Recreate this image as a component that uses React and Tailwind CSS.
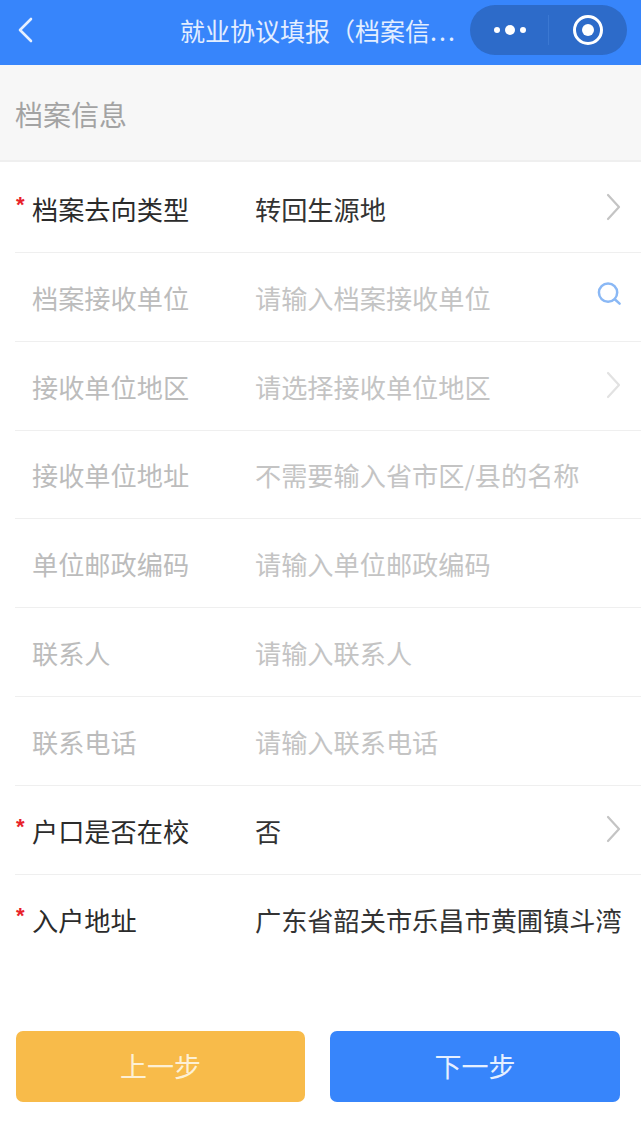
import React from 'react';

const cjk = "font-['Noto_Sans_CJK_SC','Liberation_Sans',sans-serif]";

const Chevron = ({ light }) => (
    <svg className={`w-[16px] h-[28px] mb-[2px] ${light ? 'text-[#e2e2e2]' : 'text-[#c4c4c4]'}`} viewBox="0 0 16 28" fill="none" stroke="currentColor" strokeWidth="2.2" strokeLinecap="round" strokeLinejoin="round">
        <path d="M2 2l11 12L2 26" />
    </svg>
);

const SearchIcon = () => (
    <svg className="w-[26px] h-[26px] mb-[5px] text-[#8ab8f5]" viewBox="0 0 26 26" fill="none" stroke="currentColor" strokeWidth="2.6" strokeLinecap="round">
        <circle cx="11.5" cy="11.5" r="9.5" />
        <path d="M18.5 18.5l5 4.5" />
    </svg>
);

const rows = [
    { label: '档案去向类型', value: '转回生源地', required: true, icon: <Chevron /> },
    { label: '档案接收单位', value: '请输入档案接收单位', icon: <SearchIcon /> },
    { label: '接收单位地区', value: '请选择接收单位地区', icon: <Chevron light /> },
    { label: '接收单位地址', value: '不需要输入省市区/县的名称' },
    { label: '单位邮政编码', value: '请输入单位邮政编码' },
    { label: '联系人', value: '请输入联系人' },
    { label: '联系电话', value: '请输入联系电话' },
    { label: '户口是否在校', value: '否', required: true, icon: <Chevron /> },
    { label: '入户地址', value: '广东省韶关市乐昌市黄圃镇斗湾', required: true, last: true },
];

const Row = ({ label, value, required, icon, last }) => (
    <div className={`ml-[15px] h-[88.85px] flex items-center relative ${last ? '' : 'border-b border-[#efefef]'}`}>
        {required && <span className="absolute left-[1px] top-[30px] text-[#e8212a] text-[22px] leading-[22px] font-bold font-['Liberation_Sans',sans-serif]">*</span>}
        <div className={`w-[240px] pl-[17px] pt-[2px] text-[26.2px] leading-[36px] whitespace-nowrap ${required ? 'text-[#2b2b2b]' : 'text-[#bcbcbc]'}`}>{label}</div>
        <div className={`flex-1 pt-[2px] text-[26.2px] leading-[36px] whitespace-nowrap ${required ? 'text-[#333333]' : 'text-[#c4c4c4]'}`}>{value}</div>
        {icon && <div className="w-[44px] pr-[19px] flex justify-end">{icon}</div>}
    </div>
);

export default function App() {
    return (
        <div className={`w-[641px] h-[1127px] bg-white overflow-hidden flex flex-col ${cjk}`}>
            <header className="h-[65px] shrink-0 bg-[#3785fb] flex items-center relative">
                <svg className="ml-[18px] mb-[5px] w-[15px] h-[26px] text-[#e6f0ff]" viewBox="0 0 15 26" fill="none" stroke="currentColor" strokeWidth="2.6" strokeLinecap="round" strokeLinejoin="round">
                    <path d="M13 2L2 13l11 11" />
                </svg>
                <div className="ml-[147px] mb-[6px] w-[285px] text-[25px] leading-[34px] text-[#e3eeff] whitespace-nowrap">就业协议填报（档案信<span className="tracking-[2px]">...</span></div>
                <div className="absolute left-[470px] top-[5px] w-[157px] h-[50px] rounded-full bg-[#2d6bc9] flex items-center">
                    <div className="w-[78px] flex items-center justify-center gap-[5px] pl-[1px]">
                        <span className="w-[6px] h-[6px] rounded-full bg-white" />
                        <span className="w-[10px] h-[10px] rounded-full bg-white" />
                        <span className="w-[6px] h-[6px] rounded-full bg-white" />
                    </div>
                    <div className="w-px h-[30px] bg-[#3b78d2]" />
                    <div className="flex-1 flex justify-center">
                        <div className="w-[30px] h-[30px] rounded-full border-[3px] border-white flex items-center justify-center">
                            <span className="w-[12px] h-[12px] rounded-full bg-white" />
                        </div>
                    </div>
                </div>
            </header>

            <div className="h-[97px] shrink-0 bg-[#f7f7f7] border-b-2 border-[#efefef] flex items-center pl-[15px] pt-[2px] text-[28px] leading-[38px] text-[#a3a3a3]">档案信息</div>

            <div className="mt-[2px]">
                {rows.map((row) => (
                    <Row key={row.label} {...row} />
                ))}
            </div>

            <div className="mt-[67px] px-[16px] flex gap-[25px] pr-[21px]">
                <button className="w-[289px] h-[71px] rounded-[7px] bg-[#f8bb4a] text-[27px] text-[#fdf0d5]">上一步</button>
                <button className="w-[290px] h-[71px] rounded-[7px] bg-[#3785fb] text-[27px] text-[#e6f0ff]">下一步</button>
            </div>
        </div>
    );
}
